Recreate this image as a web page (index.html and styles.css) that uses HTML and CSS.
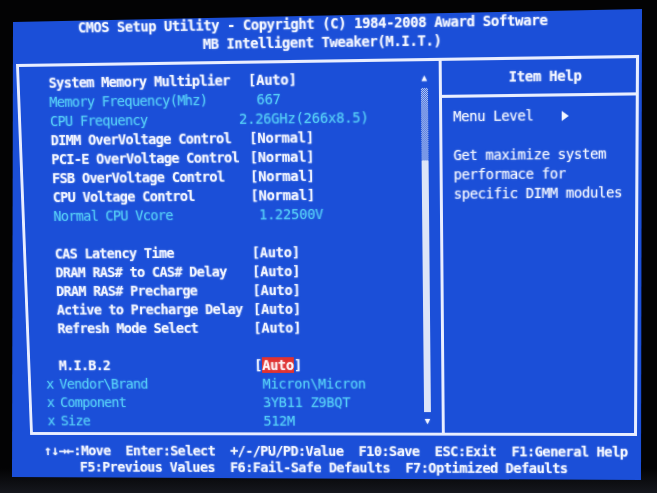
FILE: index.html
```html
<!DOCTYPE html>
<html lang="en">
<head>
    <meta charset="UTF-8">
    <meta name="viewport" content="width=device-width, initial-scale=1.0">
    <title>CMOS Setup Utility - MB Intelligent Tweaker</title>
    <link rel="stylesheet" href="styles.css">
</head>
<body>

    <div class="monitor">
        <div class="screen">
            <header class="title">
                <div class="title-main">CMOS Setup Utility - Copyright (C) 1984-2008 Award Software</div>
                <div class="title-sub">MB Intelligent Tweaker(M.I.T.)</div>
            </header>

            <div class="frame">
                <section class="items">
                    <div class="item-list">
                        <div class="row"><span class="label">System Memory Multiplier</span><span class="value">[Auto]</span></div>
                        <div class="row info"><span class="label">Memory Frequency(Mhz)</span><span class="value"> 667</span></div>
                        <div class="row info"><span class="label">CPU Frequency</span><span class="value shift">2.26GHz(266x8.5)</span></div>
                        <div class="row"><span class="label">DIMM OverVoltage Control</span><span class="value">[Normal]</span></div>
                        <div class="row"><span class="label">PCI-E OverVoltage Control</span><span class="value">[Normal]</span></div>
                        <div class="row"><span class="label">FSB OverVoltage Control</span><span class="value">[Normal]</span></div>
                        <div class="row"><span class="label">CPU Voltage Control</span><span class="value">[Normal]</span></div>
                        <div class="row info"><span class="label">Normal CPU Vcore</span><span class="value"> 1.22500V</span></div>
                        <div class="row"></div>
                        <div class="row"><span class="label">CAS Latency Time</span><span class="value">[Auto]</span></div>
                        <div class="row"><span class="label">DRAM RAS# to CAS# Delay</span><span class="value">[Auto]</span></div>
                        <div class="row"><span class="label">DRAM RAS# Precharge</span><span class="value">[Auto]</span></div>
                        <div class="row"><span class="label">Active to Precharge Delay</span><span class="value">[Auto]</span></div>
                        <div class="row"><span class="label">Refresh Mode Select</span><span class="value">[Auto]</span></div>
                        <div class="row"></div>
                        <div class="row"><span class="label">M.I.B.2</span><span class="value">[<span class="selected">Auto</span>]</span></div>
                        <div class="row info"><span class="label"><span class="mark">x</span>Vendor\Brand</span><span class="value"> Micron\Micron</span></div>
                        <div class="row info"><span class="label"><span class="mark">x</span>Component</span><span class="value"> 3YB11 Z9BQT</span></div>
                        <div class="row info"><span class="label"><span class="mark">x</span>Size</span><span class="value"> 512M</span></div>
                    </div>

                    <div class="scrollbar">
                        <span class="scroll-arrow">▲</span>
                        <div class="track"><div class="thumb"></div></div>
                        <span class="scroll-arrow">▼</span>
                    </div>
                </section>

                <aside class="help">
                    <div class="help-title">Item Help</div>
                    <div class="help-body">
                        <p>Menu Level<span class="level-arrow"></span></p>
                        <p>Get maximize system
performace for
specific DIMM modules</p>
                    </div>
                </aside>
            </div>

            <footer class="keys">
                <div class="keys-main">↑↓→←:Move  Enter:Select  +/-/PU/PD:Value  F10:Save  ESC:Exit  F1:General Help</div>
                <div class="keys-more">F5:Previous Values  F6:Fail-Safe Defaults  F7:Optimized Defaults</div>
            </footer>
        </div>
    </div>

</body>
</html>
```

FILE: styles.css
```css
* {
    box-sizing: border-box;
    margin: 0;
    padding: 0;
}

body {
    width: 657px;
    height: 493px;
    overflow: hidden;
    background: linear-gradient(#030304 0, #030304 95%, #15171d 100%);
    font-family: 'DejaVu Sans Mono', 'Liberation Mono', monospace;
    font-size: 14px;
    color: #f3f6ff;
}

/* the blue raster, slightly out of square on the tube */
.monitor {
    width: 657px;
    height: 493px;
    background: #1b4fd8;
    clip-path: polygon(13px 22px, 642px 9px, 641px 480px, 12px 477px);
}

/* text screen, keystoned onto the raster */
.screen {
    width: 634px;
    height: 462px;
    transform-origin: 0 0;
    transform: matrix3d(0.969436, -0.016854, 0, -0.0000426366,
                        0.039848, 1.020320, 0, 0.0000709968,
                        0, 0, 1, 0,
                        11.3805, 19.34956, 0, 1);
    text-shadow: 0 0 2px rgba(220, 232, 255, 0.55);
}

/* header */
.title {
    height: 44px;
    padding-top: 1px;
    font-weight: bold;
    line-height: 17.5px;
    letter-spacing: -0.43px;
}

.title-main,
.title-sub {
    white-space: pre;
}

.title-main {
    padding-left: 68px;
}

.title-sub {
    padding-left: 195px;
}

/* boxed area */
.frame {
    display: flex;
    width: 627px;
    height: 375.5px;
    margin-left: 2.5px;
    border: 3px solid #e9eeff;
}

.items {
    display: flex;
    width: 429px;
    padding: 6.5px 10.5px 0 30.5px;
    border-right: 3px solid #e9eeff;
}

.item-list {
    flex: 1;
}

.row {
    display: grid;
    grid-template-columns: 204px auto;
    height: 19px;
    line-height: 19px;
    white-space: pre;
}

.label {
    font-weight: bold;
    letter-spacing: -0.7px;
}

.value {
    font-weight: bold;
    letter-spacing: -0.23px;
}

.value.shift {
    margin-left: -10px;
}

.row.info {
    color: #55cdf6;
    text-shadow: 0 0 2px rgba(95, 205, 255, 0.5);
}

.row.info .label,
.row.info .value {
    font-weight: normal;
}

.mark {
    display: inline-block;
    width: 14px;
    margin-left: -14px;
}

.selected {
    background: #e2322f;
    color: #fff4f4;
}

/* scroll bar */
.scrollbar {
    display: flex;
    flex-direction: column;
    width: 7px;
}

.scroll-arrow {
    height: 19px;
    line-height: 19px;
    font-size: 9px;
    text-align: center;
}

.track {
    display: flex;
    flex-direction: column;
    height: 323px;
    background: repeating-conic-gradient(#c3d0f2 0 25%, #2f5fdc 0 50%) 0 0 / 2px 2px;
}

.thumb {
    margin-top: auto;
    height: 252px;
    background: #dde5f8;
}

/* help panel */
.help {
    flex: 1;
}

.help-title {
    padding: 6.5px 0 7.5px 14px;
    line-height: 19px;
    text-align: center;
    font-weight: bold;
    letter-spacing: -0.43px;
    border-bottom: 3px solid #e9eeff;
}

.help-body {
    padding: 8.5px 0 0 11.5px;
    line-height: 19px;
    letter-spacing: -0.43px;
}

.help-body p {
    white-space: pre;
}

.help-body p + p {
    margin-top: 19px;
}

.level-arrow {
    display: inline-block;
    margin-left: 28px;
    border-left: 7px solid #f3f6ff;
    border-top: 5px solid transparent;
    border-bottom: 5px solid transparent;
    vertical-align: -1px;
}

/* key legend */
.keys {
    padding-top: 8.25px;
    line-height: 17.5px;
    font-weight: bold;
}

.keys-main,
.keys-more {
    white-space: pre;
}

.keys-main {
    padding-left: 17px;
    letter-spacing: -0.59px;
}

.keys-more {
    padding-left: 54.5px;
    letter-spacing: -0.53px;
}
```
